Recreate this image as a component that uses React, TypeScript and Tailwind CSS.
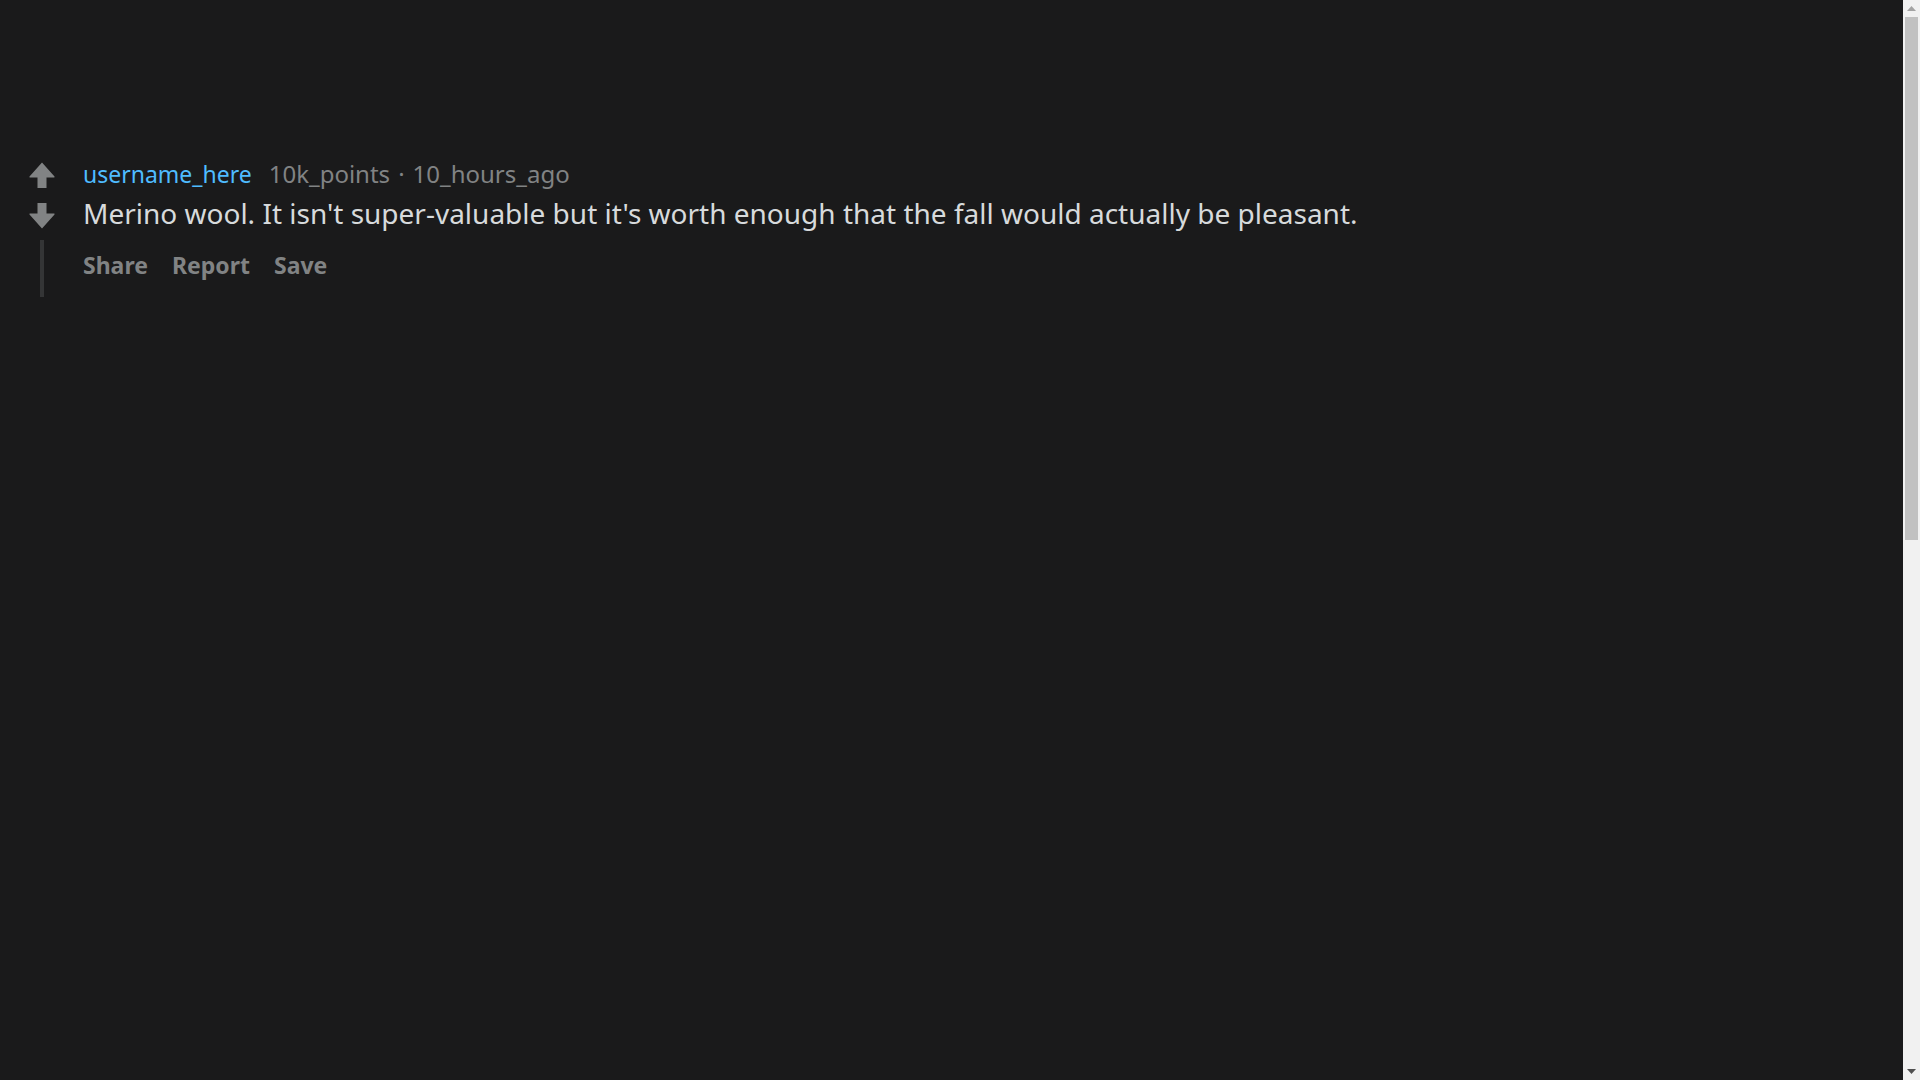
import type React from 'react';

function VoteArrow({ down = false }: { down?: boolean }): React.ReactElement {
  return (
    <svg
      width={26}
      height={26}
      viewBox="0 0 26 26"
      className={down ? 'rotate-180' : ''}
      aria-hidden="true"
    >
      <path d="M13 0.5 L25.5 14.5 Q26 15.5 25 15.5 H17.5 V26 H8.5 V15.5 H1 Q0 15.5 0.5 14.5 Z" fill="#818384" />
    </svg>
  );
}

function Scrollbar(): React.ReactElement {
  return (
    <div className="flex w-[17px] shrink-0 flex-col bg-[#f1f1f1]">
      <div className="flex h-[17px] items-center justify-center">
        <svg width={9} height={5} viewBox="0 0 9 5" aria-hidden="true">
          <path d="M4.5 0 L9 5 H0 Z" fill="#a3a3a3" />
        </svg>
      </div>
      <div className="mx-[2px] h-[523px] bg-[#c1c1c1]" />
      <div className="flex-1" />
      <div className="flex h-[17px] items-center justify-center">
        <svg width={9} height={5} viewBox="0 0 9 5" aria-hidden="true">
          <path d="M0 0 H9 L4.5 5 Z" fill="#505050" />
        </svg>
      </div>
    </div>
  );
}

export default function App(): React.ReactElement {
  return (
    <div className="flex h-screen overflow-hidden bg-[#1a1a1b] font-['Noto_Sans',sans-serif]">
      <main className="flex-1">
        <div className="flex pt-[160px] pl-[29px]">
          {/* Votes + thread line */}
          <div className="mt-[2px] flex w-[26px] flex-col items-center">
            <button type="button" aria-label="Upvote" className="block">
              <VoteArrow />
            </button>
            <button type="button" aria-label="Downvote" className="mt-[15px] block">
              <VoteArrow down />
            </button>
            <div className="mt-[11px] h-[57px] w-[4px] bg-[#343536]" />
          </div>

          {/* Comment body */}
          <div className="ml-[28px] flex flex-col">
            <div className="flex items-baseline text-[24px] leading-[28px] text-[#818384]">
              <span className="text-[23px] text-[#4fbcff]">username_here</span>
              <span className="ml-[17px]">10k_points</span>
              <span className="mx-[8px]">·</span>
              <span>10_hours_ago</span>
            </div>
            <p className="mt-[7px] text-[28px] leading-[36px] text-[#d7dadc]">
              Merino wool. It isn't super-valuable but it's worth enough that the fall would actually be pleasant.
            </p>
            <div className="mt-[19px] flex gap-[24px] text-[23px] font-bold leading-[30px] text-[#818384]">
              <button type="button">Share</button>
              <button type="button">Report</button>
              <button type="button">Save</button>
            </div>
          </div>
        </div>
      </main>
      <Scrollbar />
    </div>
  );
}
